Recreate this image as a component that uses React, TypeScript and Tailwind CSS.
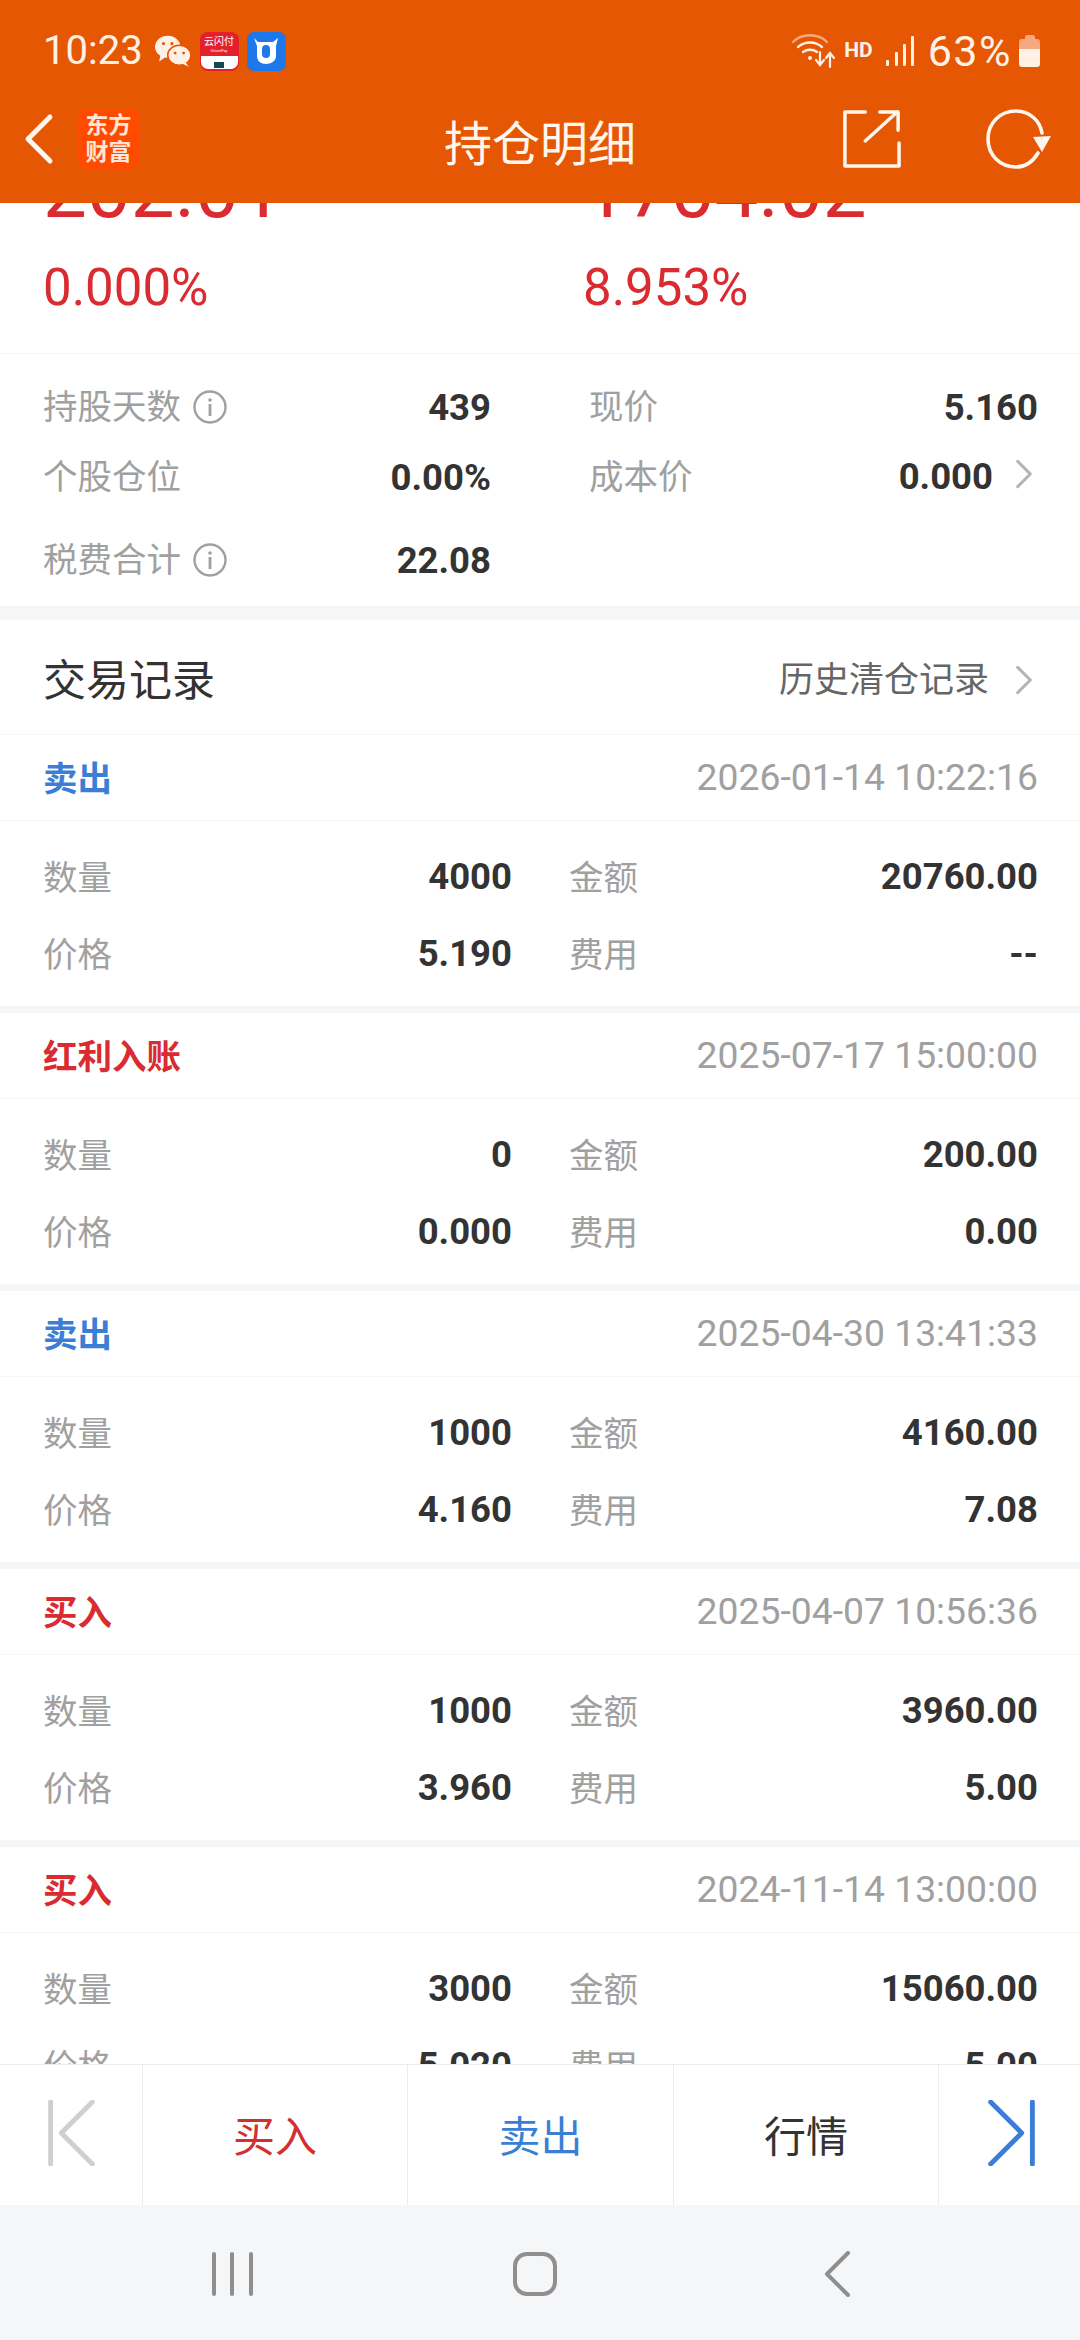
const SANS = "font-['Roboto','Noto_Sans_CJK_SC',sans-serif]";

function Chevron({ className = "-mt-[3px]" }: { className?: string }) {
  return (
    <svg viewBox="0 0 20 32" className={`w-[18px] h-[30px] mr-[5px] ${className}`} fill="none" stroke="#b5b5b5" strokeWidth="3.4" strokeLinecap="round" strokeLinejoin="round">
      <path d="M3 2 L17 16 L3 30" />
    </svg>
  );
}

function Info() {
  return (
    <svg viewBox="0 0 34 34" className="w-[34px] h-[34px] ml-[12px] -mt-[2px]" fill="none">
      <circle cx="17" cy="17" r="15.5" stroke="#a0a0a0" strokeWidth="2.4" />
      <rect x="15.6" y="14" width="2.8" height="12" fill="#a0a0a0" />
      <circle cx="17" cy="10" r="1.8" fill="#a0a0a0" />
    </svg>
  );
}

function Record({ type, color, date, rows }: { type: string; color: string; date: string; rows: string[] }) {
  const label = "text-[34.5px] text-[#a0a0a0] mt-[3px]";
  const value = "text-[36.5px] font-bold text-[#333333]";
  return (
    <section className="bg-white h-[271px] mb-[7px] shrink-0">
      <div className="h-[86px] flex items-center justify-between pl-[43px] pr-[42px] border-b border-[#f6f6f6]">
        <span className={`text-[34.5px] font-bold mt-[4px] ${color}`}>{type}</span>
        <span className="text-[37.3px] text-[#a0a0a0]">{date}</span>
      </div>
      <div className="pt-[30px] pl-[43px] pr-[42px] grid grid-cols-[526px_1fr] gap-y-[25px]">
        <div className="flex justify-between items-center h-[52px] pr-[57px]">
          <span className={label}>数量</span>
          <span className={value}>{rows[0]}</span>
        </div>
        <div className="flex justify-between items-center h-[52px]">
          <span className={label}>金额</span>
          <span className={value}>{rows[1]}</span>
        </div>
        <div className="flex justify-between items-center h-[52px] pr-[57px]">
          <span className={label}>价格</span>
          <span className={value}>{rows[2]}</span>
        </div>
        <div className="flex justify-between items-center h-[52px]">
          <span className={label}>费用</span>
          <span className={value}>{rows[3]}</span>
        </div>
      </div>
    </section>
  );
}

const RED = "text-[#d92b30]";
const BLUE = "text-[#3a7fd5]";
const STAT_LABEL = "text-[34.5px] text-[#a0a0a0]";
const STAT_VALUE = "text-[36.5px] font-bold text-[#333333]";

export default function App() {
  return (
    <div className={`w-[1080px] h-[2340px] flex flex-col overflow-hidden bg-white ${SANS}`}>
      <header className="h-[203px] shrink-0 bg-[#e65703] text-white z-10">
        <div className="h-[95px] pt-[30px] pl-[43px] pr-[40px] flex items-start justify-between text-[#fff1e6]">
          <div className="flex items-center">
            <span className="text-[40px] leading-[42px]">10:23</span>
            <svg viewBox="0 0 36 32" className="w-[38px] h-[34px] ml-[11px]">
              <ellipse cx="13" cy="12" rx="12" ry="10.5" fill="#fff1e6" />
              <path d="M6 19 L5 26 L12 21 Z" fill="#fff1e6" />
              <ellipse cx="24" cy="20" rx="11" ry="9.5" fill="#fff1e6" stroke="#e65703" strokeWidth="1.5" />
              <path d="M30 27 L33 31 L27 28 Z" fill="#fff1e6" />
              <circle cx="9" cy="9" r="1.5" fill="#e65703" />
              <circle cx="17" cy="9" r="1.5" fill="#e65703" />
              <circle cx="20" cy="18" r="1.4" fill="#e65703" />
              <circle cx="28" cy="18" r="1.4" fill="#e65703" />
            </svg>
            <div className="relative w-[39px] h-[39px] ml-[8px] rounded-[8px] bg-[#e3202c] overflow-hidden flex flex-col items-center">
              <span className="text-[10px] leading-[13px] mt-[3px] text-white whitespace-nowrap">云闪付</span>
              <span className="text-[4px] leading-[5px] text-white">UnionPay</span>
              <div className="absolute bottom-[2px] left-[1px] right-[1px] h-[13px] bg-white rounded-b-[7px] flex justify-center items-end pb-[1px]">
                <div className="w-[10px] h-[6px] bg-[#17474f]" />
              </div>
            </div>
            <div className="w-[39px] h-[39px] ml-[8px] rounded-[7px] bg-[#1f78ea]">
              <svg viewBox="0 0 39 39" className="w-[39px] h-[39px]" fill="none">
                <path d="M7 6 L11 10 H26 L31 6 L29 14 V24 C29 29 24 32 19 32 C14 32 10 29 10 24 V14 Z" fill="#fff" />
                <rect x="15" y="13" width="8" height="13" rx="4" fill="#1f78ea" />
              </svg>
            </div>
          </div>
          <div className="flex items-center">
            <svg viewBox="0 0 46 36" className="w-[46px] h-[36px]" fill="none" stroke="#fff1e6" strokeLinecap="round">
              <path d="M2 9 C11 0 27 0 36 9" stroke="#f6a880" strokeWidth="2.4" />
              <path d="M7 14 C14 8 24 8 31 14" strokeWidth="2.4" />
              <path d="M12 19 C16 16 22 16 26 19" strokeWidth="2.4" />
              <circle cx="19" cy="25" r="2" fill="#fff1e6" stroke="none" />
              <path d="M29 19 V31 M25 27 L29 32 L33 27" strokeWidth="2.2" />
              <path d="M39 34 V21 M35 25 L39 20 L43 25" strokeWidth="2.2" />
            </svg>
            <span className="text-[21px] font-bold leading-[24px] -mt-[2px] ml-[7px]">HD</span>
            <svg viewBox="0 0 28 32" className="w-[28px] h-[32px] ml-[13px]" fill="#fff1e6">
              <rect x="0" y="25" width="3" height="6" rx="1" />
              <rect x="9" y="17" width="3" height="14" rx="1" />
              <rect x="17" y="9" width="3" height="22" rx="1" />
              <rect x="25" y="1" width="3" height="30" rx="1" />
            </svg>
            <span className="text-[43px] tracking-[1.5px] leading-[42px] ml-[14px]">63%</span>
            <div className="w-[21px] h-[32px] flex flex-col items-center ml-[7px]">
              <div className="w-[10px] h-[4px] rounded-t-[2px] bg-[#f6a880]" />
              <div className="w-[21px] h-[10px] rounded-t-[3px] bg-[#f6a880]" />
              <div className="w-[21px] h-[18px] rounded-b-[3px] bg-[#fff1e6]" />
            </div>
          </div>
        </div>
        <div className="h-[108px] relative flex items-center justify-between pl-[23px] pr-[28px]">
          <div className="flex items-center gap-[23px] -mt-[20px]">
            <svg viewBox="0 0 32 54" className="w-[32px] h-[54px]" fill="none" stroke="#fff6ee" strokeWidth="5" strokeLinecap="round" strokeLinejoin="round">
              <path d="M27 5 L5 27 L27 49" />
            </svg>
            <div className="w-[61px] h-[60px] rounded-[9px] bg-[#ff4a00] flex flex-col items-center justify-center text-[#ffe6d6] text-[23px] leading-[27px] font-bold">
              <span>东方</span>
              <span>财富</span>
            </div>
          </div>
          <span className="absolute left-[444px] top-[14px] text-[48px] leading-[72px] text-[#fff6ee]">持仓明细</span>
          <div className="flex items-center gap-[85px] -mt-[20px]">
            <svg viewBox="0 0 60 60" className="w-[58px] h-[60px]" fill="none" stroke="#fff6ee" strokeWidth="3.6" strokeLinecap="round" strokeLinejoin="round">
              <path d="M23 2 H2 V58 H58 V34" />
              <path d="M23 32 L56 2" />
              <path d="M38 2 H57 V21" />
            </svg>
            <svg viewBox="0 0 66 60" className="w-[66px] h-[60px]" fill="none">
              <path d="M52 44 C46 54 38 58 30 58 C14 58 2 46 2 30 C2 14 14 2 30 2 C44 2 54 12 56 24" stroke="#fff6ee" strokeWidth="3.6" strokeLinecap="round" />
              <path d="M47 28 L65 27 L56 43 Z" fill="#fff6ee" />
            </svg>
          </div>
        </div>
      </header>

      <main className="flex-1 min-h-0 overflow-hidden bg-[#f5f6f8] flex flex-col">
        <div className="bg-white shrink-0">
          <div className="grid grid-cols-[540px_1fr] pl-[43px] h-[151px] border-b border-[#f4f4f4]">
            <div>
              <div className={`text-[78px] leading-[84px] -mt-[54px] ${RED}`}>202.01</div>
              <div className={`text-[51px] leading-[56px] mt-[27px] ${RED}`}>0.000%</div>
            </div>
            <div>
              <div className={`text-[78px] leading-[84px] -mt-[54px] ${RED}`}>1704.02</div>
              <div className={`text-[51px] leading-[56px] mt-[27px] ${RED}`}>8.953%</div>
            </div>
          </div>
          <div className="h-[252px] pl-[43px] pr-[42px] pt-[19px] grid grid-cols-[448px_1fr] grid-rows-[70px_70px_96px] items-center">
            <div className="flex items-center justify-between h-[52px]">
              <span className={`flex items-center ${STAT_LABEL}`}>持股天数<Info /></span>
              <span className={STAT_VALUE}>439</span>
            </div>
            <div className="flex items-center justify-between h-[52px] pl-[98px]">
              <span className={STAT_LABEL}>现价</span>
              <span className={STAT_VALUE}>5.160</span>
            </div>
            <div className="flex items-center justify-between h-[52px]">
              <span className={STAT_LABEL}>个股仓位</span>
              <span className={STAT_VALUE}>0.00%</span>
            </div>
            <div className="flex items-center justify-between h-[52px] pl-[98px]">
              <span className={STAT_LABEL}>成本价</span>
              <span className="flex items-center gap-[21px]">
                <span className={`${STAT_VALUE} -mt-[2px]`}>0.000</span>
                <Chevron className="ml-[1px] -mt-[8px]" />
              </span>
            </div>
            <div className="flex items-center justify-between h-[52px]">
              <span className={`flex items-center ${STAT_LABEL}`}>税费合计<Info /></span>
              <span className={STAT_VALUE}>22.08</span>
            </div>
          </div>
        </div>
        <div className="mt-[14px] bg-white h-[115px] shrink-0 pt-[8px] pl-[43px] pr-[42px] flex items-center justify-between border-b border-[#f6f6f6]">
          <span className="text-[43px] text-[#333333]">交易记录</span>
          <span className="flex items-center gap-[26px] text-[35px] text-[#666666]">历史清仓记录<Chevron /></span>
        </div>
        <Record type="卖出" color={BLUE} date="2026-01-14 10:22:16" rows={["4000", "20760.00", "5.190", "--"]} />
        <Record type="红利入账" color={RED} date="2025-07-17 15:00:00" rows={["0", "200.00", "0.000", "0.00"]} />
        <Record type="卖出" color={BLUE} date="2025-04-30 13:41:33" rows={["1000", "4160.00", "4.160", "7.08"]} />
        <Record type="买入" color={RED} date="2025-04-07 10:56:36" rows={["1000", "3960.00", "3.960", "5.00"]} />
        <Record type="买入" color={RED} date="2024-11-14 13:00:00" rows={["3000", "15060.00", "5.020", "5.00"]} />
      </main>

      <footer className="h-[141px] shrink-0 bg-white border-t border-[#ececec] flex z-10">
        <div className="w-[143px] border-r border-[#ececec] flex items-center justify-center">
          <svg viewBox="0 0 48 68" className="w-[48px] h-[66px] -mt-[4px]" fill="none" stroke="#cfcfcf" strokeLinecap="round" strokeLinejoin="round">
            <path d="M3 2 V66" strokeWidth="5" />
            <path d="M46 2 L14 34 L46 66" strokeWidth="5" />
          </svg>
        </div>
        <div className="w-[265px] pt-[5px] border-r border-[#ececec] flex items-center justify-center text-[42px] text-[#d1302f]">买入</div>
        <div className={`w-[266px] pt-[5px] border-r border-[#ececec] flex items-center justify-center text-[42px] ${BLUE}`}>卖出</div>
        <div className="w-[265px] pt-[5px] border-r border-[#ececec] flex items-center justify-center text-[42px] text-[#333333]">行情</div>
        <div className="flex-1 flex items-center justify-center pl-[4px]">
          <svg viewBox="0 0 48 68" className="w-[48px] h-[66px] -mt-[4px]" fill="none" stroke="#3a7fd5" strokeLinecap="round" strokeLinejoin="round">
            <path d="M45 2 V66" strokeWidth="5" />
            <path d="M2 2 L34 34 L2 66" strokeWidth="5" />
          </svg>
        </div>
      </footer>

      <nav className="h-[135px] shrink-0 bg-[#f5f6f8] flex items-start justify-center">
        <div className="flex items-center justify-between w-[638px] mt-[46px] mr-[18px]">
          <svg viewBox="0 0 42 44" className="w-[42px] h-[44px]" fill="#8f8f8f">
            <rect x="0" y="0" width="4" height="44" rx="2" />
            <rect x="18" y="0" width="4" height="44" rx="2" />
            <rect x="37" y="0" width="4" height="44" rx="2" />
          </svg>
          <svg viewBox="0 0 44 44" className="w-[44px] h-[44px] mr-[8px]" fill="none" stroke="#8f8f8f" strokeWidth="4">
            <rect x="2" y="2" width="40" height="40" rx="12" />
          </svg>
          <svg viewBox="0 0 26 46" className="w-[26px] h-[46px]" fill="none" stroke="#8f8f8f" strokeWidth="4" strokeLinecap="round" strokeLinejoin="round">
            <path d="M24 2 L3 23 L24 44" />
          </svg>
        </div>
      </nav>
    </div>
  );
}
